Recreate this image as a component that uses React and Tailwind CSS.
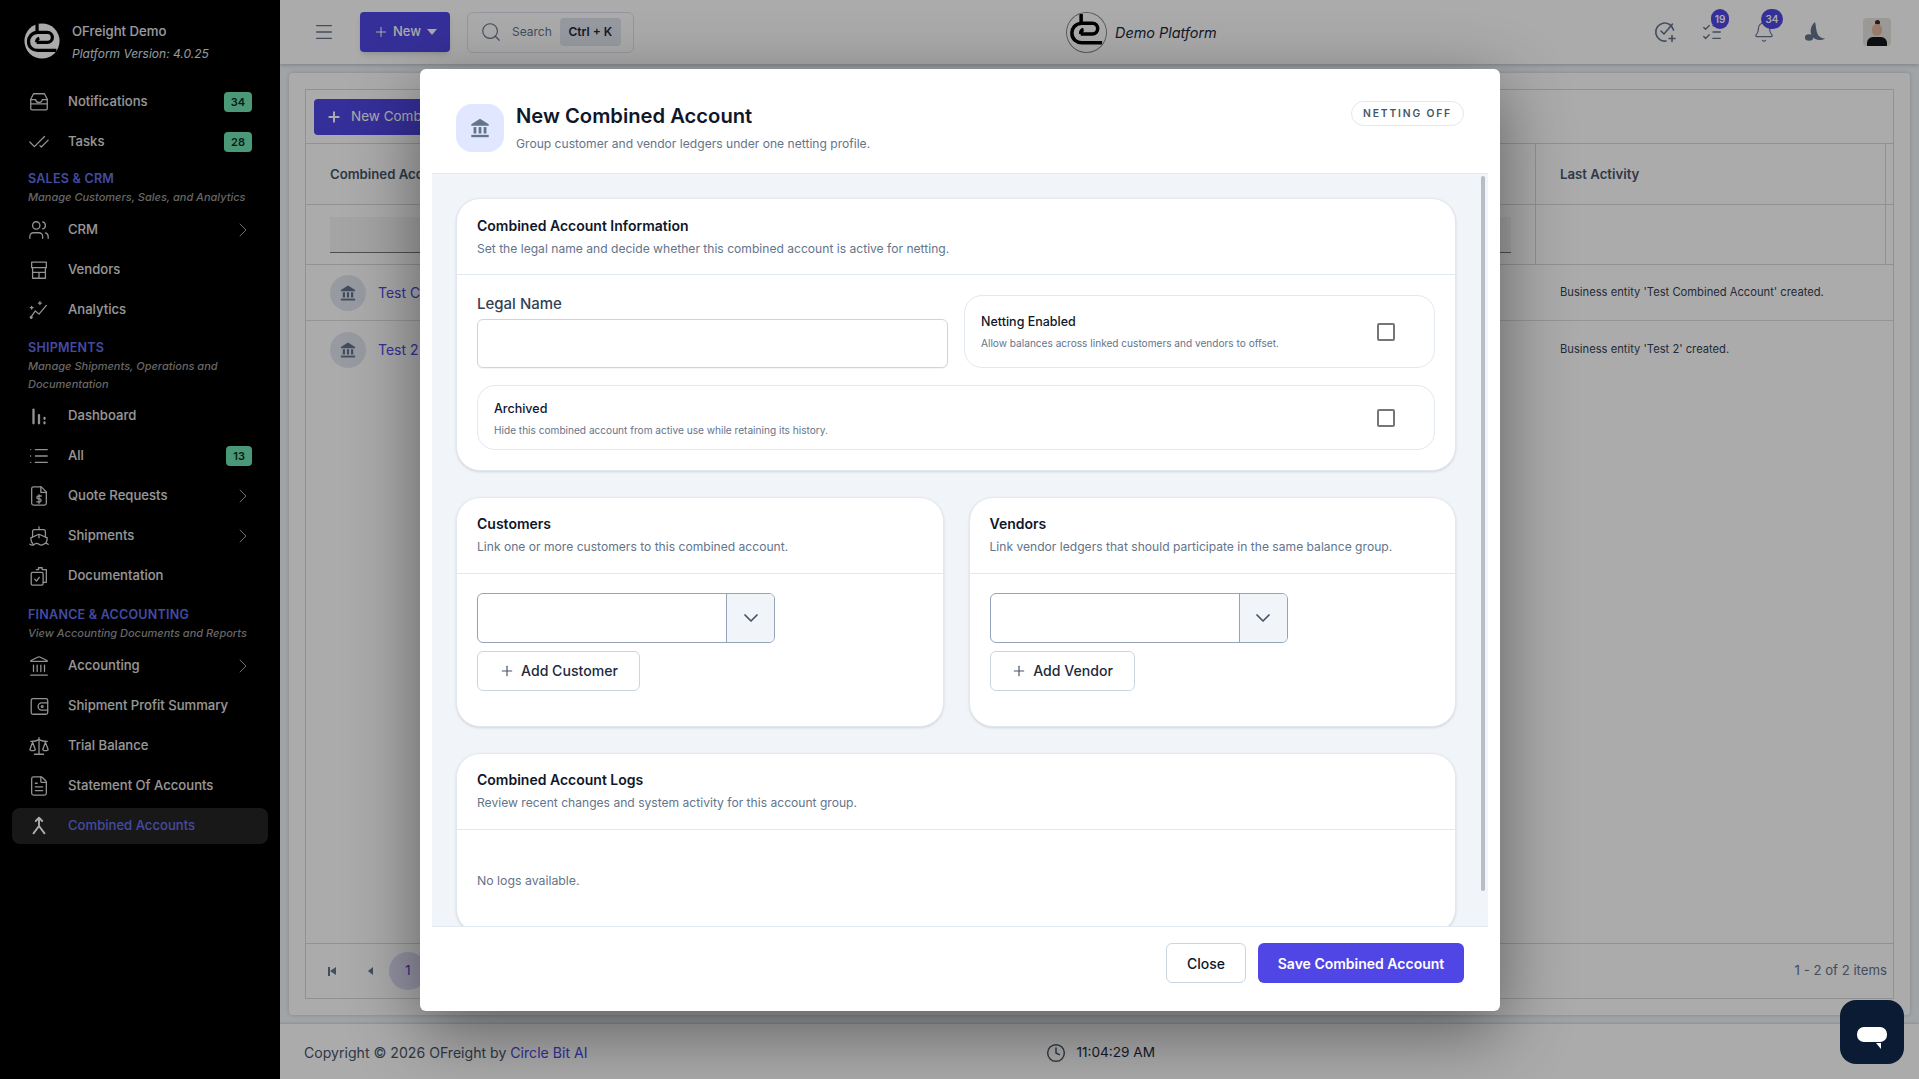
import React from "react";
import {
  CheckCheck, Users, List, FileText, Ship,
  ChevronRight, ChevronDown, Landmark, Scale, Plus, Search, Menu, ListChecks,
  Bell, Clock,
} from "lucide-react";

const FONT = "font-['Inter','Noto_Sans',sans-serif]";

const Logo = ({ className }) => (
  <svg viewBox="0 0 40 40" className={className}>
    <circle cx="20" cy="20" r="19.5" fill="currentColor" />
    <g fill="none" stroke="#000" strokeWidth="3.6">
      <path d="M14.5 1v9.5H26a5.5 5.5 0 0 1 0 11H14" />
      <path d="M15 10.5C8 11 5 16 5 20.5 5 27 10 30.5 15 30.5h21" />
      <path d="M14 21.5c0-2 1-4 3-4.5" />
    </g>
  </svg>
);

// hand drawn icons for the ones the icon pack doesn't have
const Svg = ({ className, strokeWidth = 1.4, children }) => (
  <svg viewBox="0 0 24 24" fill="none" stroke="currentColor" strokeWidth={strokeWidth} strokeLinecap="round" strokeLinejoin="round" className={className}>
    {children}
  </svg>
);
const TrayIcon = (p) => (
  <Svg {...p}><path d="M6 3h12l3 6v10a1.5 1.5 0 0 1-1.5 1.5h-15A1.5 1.5 0 0 1 3 19V9z" /><path d="M3 9.5h5.5a3.5 3 0 0 0 7 0H21" /><path d="M3 14h18" /></Svg>
);
const StoreIcon = (p) => (
  <Svg {...p}><path d="M4 3.5h16M4 3.5v6h16v-6M5 9.5V21h14V9.5M5 14.5h14M12 14.5V21" /></Svg>
);
const SparkIcon = (p) => (
  <Svg {...p}><path d="M3 20l5-7 4 3.5L20 7" /><circle cx="3.5" cy="20" r="1" fill="currentColor" /><path d="M4 8v3M2.5 9.5h3M13 3v3M11.5 4.5h3" /></Svg>
);
const BarsIcon = (p) => (
  <Svg {...p} strokeWidth={2.5}><path d="M6 5v15M12 11v9M18 14v1M18 19v1" /></Svg>
);
const QuoteIcon = (p) => (
  <Svg {...p}><path d="M14.5 2H6a2 2 0 0 0-2 2v16a2 2 0 0 0 2 2h12a2 2 0 0 0 2-2V7.5z" /><path d="M14 2v6h6" /><path d="M14.5 12h-3.2a1.6 1.6 0 0 0 0 3.2h1.4a1.6 1.6 0 0 1 0 3.2H9.5M12 10.5v9.5" /></Svg>
);
const ClipsIcon = (p) => (
  <Svg {...p}><rect x="3.5" y="8" width="13" height="14" rx="1.5" /><path d="M7.5 15.5l1.8 2 3-4" /><path d="M9 5h2.5V3h4v2H20v14h-3.5" /></Svg>
);
const WalletIcon = (p) => (
  <Svg {...p}><rect x="3.5" y="4" width="18" height="17" rx="2" /><path d="M21.5 8.5H15a3.5 3.5 0 0 0 0 8h6.5" /><circle cx="15.5" cy="12.5" r="1" /></Svg>
);
const ForkIcon = (p) => (
  <Svg {...p} strokeWidth={2.1}><path d="M8.5 6.5L12 3l3.5 3.5M12 3v9l-6 8M12 12l6 8" /></Svg>
);
const BankIcon = ({ className }) => (
  <svg viewBox="0 0 24 24" fill="currentColor" className={className}>
    <path d="M12 2l9.5 6v1.5h-19V8z" />
    <rect x="5" y="11" width="3" height="7" />
    <rect x="10.5" y="11" width="3" height="7" />
    <rect x="16" y="11" width="3" height="7" />
    <rect x="2.5" y="19.5" width="19" height="2.5" />
  </svg>
);
const CheckPlusIcon = ({ className }) => (
  <Svg className={className} strokeWidth={1.6}>
    <path d="M20.5 10a9 9 0 1 0-7.5 11" /><path d="M8 11l3 3 8.5-10" /><path d="M19 15.5v6M16 18.5h6" />
  </Svg>
);
const ShadeIcon = ({ className }) => (
  <svg viewBox="0 0 24 24" fill="currentColor" className={className}>
    <path d="M12 1C7 5 6 12 9 17c3 4 9 5 14 2-5 0-8-3-9-7-1-4-1-8-2-11z" />
    <ellipse cx="5.5" cy="18" rx="4.5" ry="3.5" />
  </svg>
);

const NavItem = ({ icon: Icon, label, badge, chevron, active }) => (
  <div className={`mx-3 flex items-center rounded-lg pl-4 pr-4 ${active ? "my-0.5 h-9 bg-[#252525]" : "h-10"}`}>
    <Icon className={`h-[22px] w-[22px] shrink-0 ${active ? "text-white" : "text-[#dcdcdc]"}`} strokeWidth={1.4} />
    <span className={`ml-[18px] flex-1 text-[13.1px] font-medium ${active ? "text-[#6671e8]" : "text-[#e2e2e2]"}`}>{label}</span>
    {badge && (
      <span className="rounded-[4px] bg-[#6fe3b4] px-[7px] py-[3px] text-[11px] font-semibold leading-[14px] text-[#0b2a1d]">{badge}</span>
    )}
    {chevron && <ChevronRight className="-mr-[3px] h-6 w-6 text-[#a3a3a3]" strokeWidth={1} />}
  </div>
);

const Section = ({ title, desc, className }) => (
  <div className={`px-7 ${className}`}>
    <div className="text-[12.5px] font-semibold leading-[20px] tracking-[0.02em] text-[#6671ee]">{title}</div>
    <div className="text-[11px] font-medium italic leading-[17.5px] text-[#9a9a9a]">{desc}</div>
  </div>
);

const Sidebar = () => (
  <aside className="flex h-full w-[280px] shrink-0 flex-col bg-black">
    <div className="flex h-[82px] items-start pl-6 pt-[23px]">
      <Logo className="h-9 w-9 text-white" />
      <div className="ml-3">
        <div className="-mt-[1px] text-[13.2px] font-medium leading-[18px] text-[#e2e8f0]">OFreight Demo</div>
        <div className="mt-[5px] text-[12px] italic leading-[18px] text-[#dbe4ee]">Platform Version: 4.0.25</div>
      </div>
    </div>
    <NavItem icon={TrayIcon} label="Notifications" badge="34" />
    <NavItem icon={CheckCheck} label="Tasks" badge="28" />
    <Section title="SALES & CRM" desc="Manage Customers, Sales, and Analytics" className="pb-[3.5px] pt-[7px]" />
    <NavItem icon={Users} label="CRM" chevron />
    <NavItem icon={StoreIcon} label="Vendors" />
    <NavItem icon={SparkIcon} label="Analytics" />
    <Section title="SHIPMENTS" desc={<>Manage Shipments, Operations and<br />Documentation</>} className="pb-[3px] pt-[8px]" />
    <NavItem icon={BarsIcon} label="Dashboard" />
    <NavItem icon={List} label="All" badge="13" />
    <NavItem icon={QuoteIcon} label="Quote Requests" chevron />
    <NavItem icon={Ship} label="Shipments" chevron />
    <NavItem icon={ClipsIcon} label="Documentation" />
    <Section title="FINANCE & ACCOUNTING" desc="View Accounting Documents and Reports" className="pb-[4px] pt-[8.5px]" />
    <NavItem icon={Landmark} label="Accounting" chevron />
    <NavItem icon={WalletIcon} label="Shipment Profit Summary" />
    <NavItem icon={Scale} label="Trial Balance" />
    <NavItem icon={FileText} label="Statement Of Accounts" />
    <NavItem icon={ForkIcon} label="Combined Accounts" active />
  </aside>
);

const Count = ({ n, className }) => (
  <span className={`absolute -top-3 flex h-5 items-center justify-center rounded-full bg-[#4f46e5] text-[10px] font-semibold text-white ${className}`}>{n}</span>
);

const Topbar = () => (
  <header className="flex h-16 shrink-0 items-center bg-white pl-[33px] pr-7 shadow-[0_1px_4px_rgba(15,23,42,0.25)]">
    <Menu className="h-[22px] w-[22px] text-[#64748b]" strokeWidth={1.5} />
    <button className="ml-[25px] flex h-10 w-[90px] items-center justify-center gap-1 rounded bg-[#5046e5] text-[13px] font-medium text-white shadow-md">
      <Plus className="h-4 w-4" strokeWidth={1.5} />
      New
      <span className="ml-0.5 h-0 w-0 border-x-[5px] border-t-[6px] border-x-transparent border-t-white" />
    </button>
    <div className="ml-[17px] flex h-[41px] w-[167px] items-center rounded-md border border-[#dde3ec] pl-3">
      <Search className="h-[22px] w-[22px] text-[#64748b]" strokeWidth={1.25} />
      <span className="ml-2.5 text-[12px] text-[#64748b]">Search</span>
      <span className="ml-2 flex h-7 w-[61px] items-center justify-center rounded bg-[#e2e8f0] text-[12px] font-semibold text-[#1e293b]">Ctrl + K</span>
    </div>
    <div className="ml-[433px] flex items-center">
      <Logo className="h-[39px] w-[39px] rounded-full text-white ring-1 ring-[#888]" />
      <span className="ml-[9px] mt-[2px] text-[14.4px] italic text-[#1e293b]">Demo Platform</span>
    </div>
    <div className="ml-auto flex items-center">
      <CheckPlusIcon className="h-6 w-6 text-[#64748b]" />
      <span className="relative ml-6">
        <ListChecks className="h-[22px] w-[22px] text-[#64748b]" strokeWidth={1.5} />
        <Count n="19" className="-right-1.5 w-[18px]" />
      </span>
      <span className="relative ml-[30px]">
        <Bell className="h-[22px] w-[22px] text-[#64748b]" strokeWidth={1.25} />
        <Count n="34" className="-right-[8px] w-[22px]" />
      </span>
      <ShadeIcon className="ml-[29px] h-[22px] w-[22px] text-[#64748b]" />
      <span className="ml-[37px] flex h-7 w-7 items-end justify-center overflow-hidden rounded bg-[#e8e4de]">
        <span className="relative h-[26px] w-5">
          <span className="absolute left-[7.5px] top-0 h-[5px] w-[5px] rounded-full bg-[#3a2a22]" />
          <span className="absolute left-[5px] top-[4px] h-[12px] w-[10px] rounded-full bg-[#e5b8a0]" />
          <span className="absolute bottom-0 left-0 h-[9px] w-5 rounded-t-md bg-[#14161b]" />
        </span>
      </span>
    </div>
  </header>
);

const BankAvatar = () => (
  <span className="flex h-9 w-9 items-center justify-center rounded-full bg-[#e2e8f0]">
    <BankIcon className="h-[18px] w-[18px] text-[#64748b]" />
  </span>
);

const Row = ({ name, log, h }) => (
  <div className={`flex items-center border-[#dfdfdf] pl-6 ${h}`}>
    <BankAvatar />
    <span className="ml-3 text-[14px] text-[#5046e5]">{name}</span>
    <span className="ml-auto w-[333px] text-[11.2px] text-[#334155]">{log}</span>
  </div>
);

const Page = () => (
  <main className="flex min-w-0 flex-1 flex-col bg-[#f1f5f9]">
    <Topbar />
    <div className="flex-1 p-[9px]">
      <div className="h-full rounded bg-white p-4 shadow-[0_0_4px_rgba(15,23,42,0.2)]">
        <div className="flex h-full flex-col border border-[#d9d9d9]">
          <div className="flex h-[54px] shrink-0 items-center border-b border-[#d9d9d9] pl-2">
            <button className="flex h-9 w-[240px] items-center gap-[9px] rounded bg-[#5046e5] pl-3 text-[13.5px] text-white">
              <Plus className="h-4 w-4" strokeWidth={3} />
              New Combined Account
            </button>
          </div>
          <div className="flex h-[61px] shrink-0 items-center border-b border-[#d9d9d9] pl-6 text-[13.2px] font-semibold text-[#475569]">
            <span className="mt-[2px]">Combined Account</span>
            <span className="ml-auto mr-[7px] flex h-full w-[351px] items-center border-x border-[#d9d9d9] pl-6 pt-[2px]">Last Activity</span>
          </div>
          <div className="flex h-[60px] shrink-0 items-center border-b border-[#d9d9d9] pl-6">
            <div className="h-9 w-[1181px] border-b border-[#777] bg-[#f5f5f5]" />
            <span className="ml-auto mr-[7px] h-full w-[351px] border-x border-[#d9d9d9]" />
          </div>
          <Row name="Test Combined Account" log="Business entity 'Test Combined Account' created." h="h-[56px] border-b" />
          <Row name="Test 2" log="Business entity 'Test 2' created." h="h-[57px]" />
          <div className="flex-1" />
          <div className="flex h-[55px] shrink-0 items-center border-t border-[#d9d9d9] pl-[22px] pr-1.5">
            <span className="h-[9px] w-[2px] bg-[#64748b]" />
            <span className="h-0 w-0 border-y-[4.5px] border-r-[6px] border-y-transparent border-r-[#64748b]" />
            <span className="ml-[32px] h-0 w-0 border-y-[4px] border-r-[5px] border-y-transparent border-r-[#64748b]" />
            <span className="ml-4 flex h-[38px] w-[38px] items-center justify-center rounded-full bg-[#dcdcf5] text-[13px] text-[#4338ca]">1</span>
            <span className="ml-auto text-[13.2px] text-[#64748b]">1 - 2 of 2 items</span>
          </div>
        </div>
      </div>
    </div>
    <footer className="flex h-[55px] shrink-0 items-center bg-white pl-6 pt-[2px] text-[14.1px] text-[#475569] shadow-[0_-1px_2px_rgba(15,23,42,0.15)]">
      <span>Copyright © 2026 OFreight by <span className="text-[#4f46e5]">Circle Bit AI</span></span>
      <Clock className="ml-[459px] h-5 w-5 text-[#475569]" strokeWidth={1.75} />
      <span className="ml-[10px] text-[13.6px] text-[#1e293b]">11:04:29 AM</span>
    </footer>
  </main>
);

const CardHead = ({ title, sub, className = "" }) => (
  <div className={`flex h-[76px] flex-col justify-center border-b border-[#e2e8f0] px-5 pb-[2px] ${className}`}>
    <div className="text-[14px] font-semibold leading-5 text-[#0f172a]">{title}</div>
    <div className="mt-[5px] text-[12.1px] leading-4 text-[#64748b]">{sub}</div>
  </div>
);

const Card = ({ className = "", children }) => (
  <section className={`rounded-3xl border border-[#e2e8f0] bg-white shadow-sm ${className}`}>{children}</section>
);

const ToggleBox = ({ title, sub, className }) => (
  <div className={`flex items-center justify-between rounded-[18px] border border-[#e2e8f0] pl-4 pr-[39px] ${className}`}>
    <div>
      <div className="text-[12.5px] font-medium leading-5 text-[#0f172a]">{title}</div>
      <div className="mt-[3px] text-[10.1px] leading-4 text-[#64748b]">{sub}</div>
    </div>
    <span className="h-[18px] w-[18px] rounded-[2px] border-2 border-[#767676]" />
  </div>
);

const LinkCard = ({ title, sub, button, width }) => (
  <Card className="h-[230px]">
    <CardHead title={title} sub={sub} />
    <div className="px-5 pt-[19px]">
      <div className="flex h-[50px] w-[298px] overflow-hidden rounded-md border border-[#94a3b8]">
        <div className="flex-1" />
        <div className="flex w-[48px] items-center justify-center border-l border-[#94a3b8] bg-[#f1f5f9]">
          <ChevronDown className="h-6 w-6 text-[#475569]" strokeWidth={1.75} />
        </div>
      </div>
      <button className={`mt-2 flex h-10 items-center justify-center gap-1.5 rounded-md border border-[#cbd5e1] bg-white text-[14.1px] font-medium text-[#1e293b] ${width}`}>
        <Plus className="h-4 w-4 text-[#475569]" strokeWidth={1.75} />
        {button}
      </button>
    </div>
  </Card>
);

const Modal = () => (
  <div className="absolute left-[420px] top-[69px] flex h-[942px] w-[1080px] flex-col rounded-md bg-white shadow-[0_20px_70px_rgba(0,0,0,0.45)]">
    <div className="flex h-[104px] shrink-0 items-start justify-between pl-9 pr-9 pt-[32px]">
      <div className="mt-[2px] flex items-center">
        <span className="flex h-12 w-12 items-center justify-center rounded-2xl bg-[#e0e7ff]">
          <BankIcon className="h-[22px] w-[22px] text-[#64748b]" />
        </span>
        <div className="ml-3">
          <h2 className="-mt-[1px] text-[20.2px] font-semibold leading-7 text-[#0f172a]">New Combined Account</h2>
          <p className="mt-[5px] text-[12.1px] leading-[18px] text-[#64748b]">Group customer and vendor ledgers under one netting profile.</p>
        </div>
      </div>
      <span className="flex h-[25px] w-[113px] items-center justify-center rounded-full border border-[#e2e8f0] text-[10.3px] font-semibold tracking-[0.18em] text-[#475569]">NETTING OFF</span>
    </div>
    <div className="relative mx-3 flex-1 overflow-hidden border-y border-[#e2e8f0] bg-[#f1f5f9] pl-[24px] pr-[32px] pt-6">
      <span className="absolute right-[3px] top-[2px] h-[715px] w-1 rounded-full bg-[#b8bcc4]" />
      <Card className="h-[273px]">
        <CardHead title="Combined Account Information" sub="Set the legal name and decide whether this combined account is active for netting." className="pt-[2px]" />
        <div className="px-5 pt-[16.5px]">
          <div className="grid grid-cols-2 gap-4">
            <div>
              <label className="block text-[15px] font-medium leading-6 text-[#334155]">Legal Name</label>
              <div className="mt-[3.5px] h-[49px] rounded-md border border-[#cbd5e1] shadow-[0_1px_1px_rgba(15,23,42,0.05)]" />
            </div>
            <ToggleBox title="Netting Enabled" sub="Allow balances across linked customers and vendors to offset." className="mt-[3.5px] h-[73px]" />
          </div>
          <ToggleBox title="Archived" sub="Hide this combined account from active use while retaining its history." className="mt-[17px] h-[65px] pt-[1px]" />
        </div>
      </Card>
      <div className="mt-[26px] grid grid-cols-2 gap-[25px]">
        <LinkCard title="Customers" sub="Link one or more customers to this combined account." button="Add Customer" width="w-[163px]" />
        <LinkCard title="Vendors" sub="Link vendor ledgers that should participate in the same balance group." button="Add Vendor" width="w-[145px]" />
      </div>
      <Card className="mt-[26px] h-[180px]">
        <CardHead title="Combined Account Logs" sub="Review recent changes and system activity for this account group." />
        <p className="px-5 pt-[43px] text-[12.3px] leading-4 text-[#64748b]">No logs available.</p>
      </Card>
    </div>
    <div className="flex h-[84px] shrink-0 items-center justify-end gap-3 pb-[12px] pr-9">
      <button className="h-10 w-20 rounded-md border border-[#cbd5e1] bg-white text-[14px] font-medium text-[#0f172a]">Close</button>
      <button className="h-10 w-[206px] rounded-md bg-[#4f46e5] text-[14px] font-semibold text-white">Save Combined Account</button>
    </div>
  </div>
);

export default function App() {
  return (
    <div className={`relative flex h-screen overflow-hidden ${FONT}`}>
      <Sidebar />
      <Page />
      <div className="absolute inset-0 bg-black/33" />
      <Modal />
      <button className="absolute bottom-[15px] right-[15px] flex h-16 w-16 items-center justify-center rounded-2xl bg-[#0b1b33]">
        <span className="relative mt-1 block h-[15px] w-[30px] rounded-[7px] bg-white">
          <span className="absolute -bottom-[7px] right-[6px] h-0 w-0 border-l-[5px] border-t-[6px] border-l-transparent border-t-white" />
        </span>
      </button>
    </div>
  );
}
